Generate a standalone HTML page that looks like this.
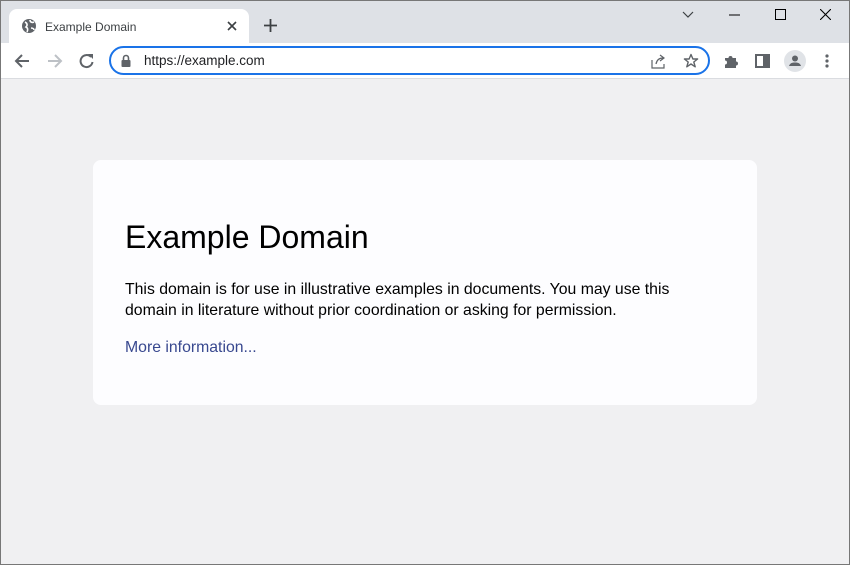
<!DOCTYPE html>
<html><head><meta charset="utf-8"><style>
*{margin:0;padding:0;box-sizing:border-box}
body{width:850px;height:565px;overflow:hidden;font-family:"Liberation Sans",sans-serif;background:#f0f0f2;position:relative}
.frame{position:absolute;inset:0;border:1px solid #777;pointer-events:none;z-index:9}
.strip{position:absolute;left:0;top:0;width:850px;height:43px;background:#dee1e6}
.tab{position:absolute;left:9px;top:9px;width:240px;height:35px;background:#fff;border-radius:8px 8px 0 0}
.tab .t{position:absolute;left:36px;top:11px;font-size:12px;color:#3c4043}
.bar{position:absolute;left:0;top:43px;width:850px;height:36px;background:#fff;border-bottom:1px solid #dadce0}
.omni{position:absolute;left:109px;top:3px;width:601px;height:29px;border:2px solid #1a73e8;border-radius:15px}
.omni .u{position:absolute;left:33px;top:5px;font-size:13.5px;color:#202124}
svg{position:absolute}
.card{position:absolute;left:93px;top:160px;width:664px;height:245px;background:#fdfdff;border-radius:8px}
h1{position:absolute;left:32px;top:59px;font-size:32px;font-weight:normal;color:#000}
p{position:absolute;left:32px;font-size:15.8px;line-height:21px;color:#000}
a{color:#38488f;text-decoration:none}
</style></head><body>
<div class="strip"></div>
<div class="tab"><span class="t">Example Domain</span></div>
<svg style="left:21px;top:18px" width="16" height="16" viewBox="0 0 16 16"><circle cx="8" cy="8" r="7" fill="#5f6368"/><path d="M4 4c2 1 3 3 1 5 2 1 2 3 1 5M9 2c0 2 2 3 4 2M10 10c2 0 3 1 3 2" stroke="#fff" stroke-width="1.6" fill="none"/></svg>
<svg style="left:227px;top:21px" width="10" height="10"><path d="M1 1L9 9M9 1L1 9" stroke="#3c4043" stroke-width="1.6"/></svg>
<svg style="left:264px;top:19px" width="13" height="13"><path d="M6.5 0V13M0 6.5H13" stroke="#3c4043" stroke-width="1.8"/></svg>
<svg style="left:682px;top:11px" width="12" height="8"><path d="M1 1L6 6L11 1" stroke="#3c4043" stroke-width="1.2" fill="none"/></svg>
<svg style="left:729px;top:14px" width="11" height="2"><path d="M0 1H11" stroke="#000" stroke-width="1"/></svg>
<svg style="left:775px;top:9px" width="11" height="11"><rect x="0.5" y="0.5" width="10" height="10" stroke="#000" fill="none"/></svg>
<svg style="left:820px;top:9px" width="11" height="11"><path d="M0 0L11 11M11 0L0 11" stroke="#000" stroke-width="1.1"/></svg>
<div class="bar">
<svg style="left:14px;top:10px" width="16" height="16"><path d="M15 8H2M8 2L2 8L8 14" stroke="#5f6368" stroke-width="2" fill="none"/></svg>
<svg style="left:47px;top:10px" width="16" height="16"><path d="M1 8H14M8 2L14 8L8 14" stroke="#bdc1c6" stroke-width="2" fill="none"/></svg>
<svg style="left:79px;top:10px" width="16" height="16"><path d="M13.5 9A6 6 0 1 1 12 4" stroke="#5f6368" stroke-width="2" fill="none"/><path d="M9 1H14V6Z" fill="#5f6368"/></svg>
<div class="omni"><svg style="left:10px;top:6px" width="10" height="13"><path d="M2.5 6V4a2.5 2.5 0 0 1 5 0v2" stroke="#5f6368" stroke-width="1.6" fill="none"/><rect x="0.5" y="6" width="9" height="7" rx="1" fill="#5f6368"/></svg><span class="u">https://example.com</span>
<svg style="left:540px;top:6px" width="16" height="15"><path d="M1 6V14H13V10M5 10C6 5 9 4 12 4M9 1L13 4L9 7" stroke="#5f6368" stroke-width="1.2" fill="none"/></svg>
<svg style="left:572px;top:5px" width="16" height="16"><path d="M8 1.5L9.9 6H14.6L10.8 9L12.2 13.8L8 11L3.8 13.8L5.2 9L1.4 6H6.1Z" stroke="#5f6368" stroke-width="1.4" fill="none" stroke-linejoin="round"/></svg></div>
<svg style="left:723px;top:10px" width="16" height="16" viewBox="0 0 16 16"><path d="M2 5H5.5A2 2 0 0 1 9.5 5H13V8.5A2 2 0 0 1 13 12.5V15H2V11.5A2 2 0 0 0 2 7.5Z" fill="#5f6368"/></svg>
<svg style="left:755px;top:11px" width="15" height="14"><rect x="1" y="1" width="13" height="12" stroke="#5f6368" stroke-width="2" fill="none"/><rect x="8" y="1" width="6" height="12" fill="#5f6368"/></svg>
<svg style="left:784px;top:7px" width="22" height="22"><circle cx="11" cy="11" r="11" fill="#e0e3e7"/><circle cx="11" cy="8.5" r="3" fill="#5f6368"/><path d="M5 16c1-3 3-3.5 6-3.5s5 .5 6 3.5Z" fill="#5f6368"/></svg>
<svg style="left:825px;top:11px" width="4" height="14"><circle cx="2" cy="2" r="1.6" fill="#5f6368"/><circle cx="2" cy="7" r="1.6" fill="#5f6368"/><circle cx="2" cy="12" r="1.6" fill="#5f6368"/></svg>
</div>
<div class="card">
<h1>Example Domain</h1>
<p style="top:119px">This domain is for use in illustrative examples in documents. You may use this<br>domain in literature without prior coordination or asking for permission.</p>
<p style="top:177px"><a>More information...</a></p>
</div>
<div class="frame"></div>
</body></html>
